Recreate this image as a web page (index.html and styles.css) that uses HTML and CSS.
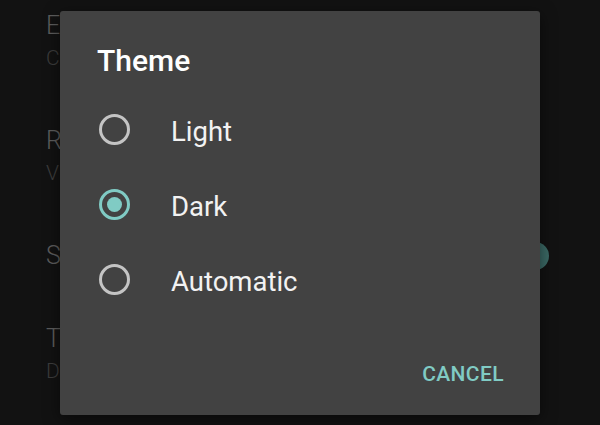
FILE: index.html
```html
<!DOCTYPE html>
<html lang="en">
<head>
    <meta charset="UTF-8">
    <meta name="viewport" content="width=device-width, initial-scale=1.0">
    <title>Settings - Theme</title>
    <link rel="stylesheet" href="styles.css">
</head>
<body>
    <div class="settings">
        <div class="setting">
            <div class="setting-text">
                <div class="setting-title">E</div>
                <div class="setting-sub">C</div>
            </div>
        </div>
        <div class="setting">
            <div class="setting-text">
                <div class="setting-title">R</div>
                <div class="setting-sub">V</div>
            </div>
        </div>
        <div class="setting">
            <div class="setting-text">
                <div class="setting-title">S</div>
            </div>
            <div class="toggle"></div>
        </div>
        <div class="setting">
            <div class="setting-text">
                <div class="setting-title">T</div>
                <div class="setting-sub">D</div>
            </div>
        </div>
    </div>

    <div class="dialog">
        <h2 class="dialog-title">Theme</h2>
        <div class="options">
            <label class="option">
                <span class="radio"></span>
                <span class="option-label">Light</span>
            </label>
            <label class="option">
                <span class="radio checked"></span>
                <span class="option-label">Dark</span>
            </label>
            <label class="option">
                <span class="radio"></span>
                <span class="option-label">Automatic</span>
            </label>
        </div>
        <div class="actions">
            <button class="text-button">CANCEL</button>
        </div>
    </div>
</body>
</html>
```

FILE: styles.css
```css
* {
    margin: 0;
    padding: 0;
    box-sizing: border-box;
}

body {
    font-family: Roboto, 'Noto Sans', sans-serif;
    background: #121212;
    width: 600px;
    height: 425px;
    overflow: hidden;
    position: relative;
}

/* settings list behind the dialog */
.settings {
    display: flex;
    flex-direction: column;
    gap: 51px;
    padding: 10px 51px 0 46px;
}

.setting {
    display: flex;
    align-items: center;
    justify-content: space-between;
}

.setting-title {
    font-size: 25px;
    line-height: 32px;
    font-weight: 300;
    color: #5c5c5c;
}

.setting-sub {
    font-size: 21px;
    line-height: 32px;
    font-weight: 300;
    color: #3c3c3c;
}

.toggle {
    width: 28px;
    height: 28px;
    border-radius: 50%;
    background: #3b6965;
}

/* dialog */
.dialog {
    position: absolute;
    left: 60px;
    top: 11px;
    width: 480px;
    height: 404px;
    background: #424242;
    border-radius: 3px;
    box-shadow: 0 4px 16px rgba(0, 0, 0, 0.5);
    padding: 32px 37px 17px 37px;
    display: flex;
    flex-direction: column;
}

.dialog-title {
    font-size: 30px;
    line-height: 36px;
    font-weight: 500;
    color: #ffffff;
    margin-bottom: 13px;
}

.options {
    display: flex;
    flex-direction: column;
}

.option {
    display: flex;
    align-items: center;
    height: 75px;
    gap: 41px;
    padding-left: 2px;
}

.radio {
    width: 31px;
    height: 31px;
    border: 3px solid #c4c4c4;
    border-radius: 50%;
    display: flex;
    align-items: center;
    justify-content: center;
}

.radio.checked {
    border-color: #80cbc4;
}

.radio.checked::after {
    content: '';
    width: 15px;
    height: 15px;
    border-radius: 50%;
    background: #80cbc4;
}

.option-label {
    font-size: 27.5px;
    color: #f2f2f2;
    padding-top: 3px;
}

.actions {
    margin-top: auto;
    display: flex;
    justify-content: flex-end;
}

.text-button {
    font-family: Roboto, 'Noto Sans', sans-serif;
    background: none;
    border: none;
    color: #80cbc4;
    font-size: 21px;
    font-weight: 500;
    letter-spacing: 0.4px;
    height: 48px;
    padding: 0;
    margin-right: -1px;
}
```
